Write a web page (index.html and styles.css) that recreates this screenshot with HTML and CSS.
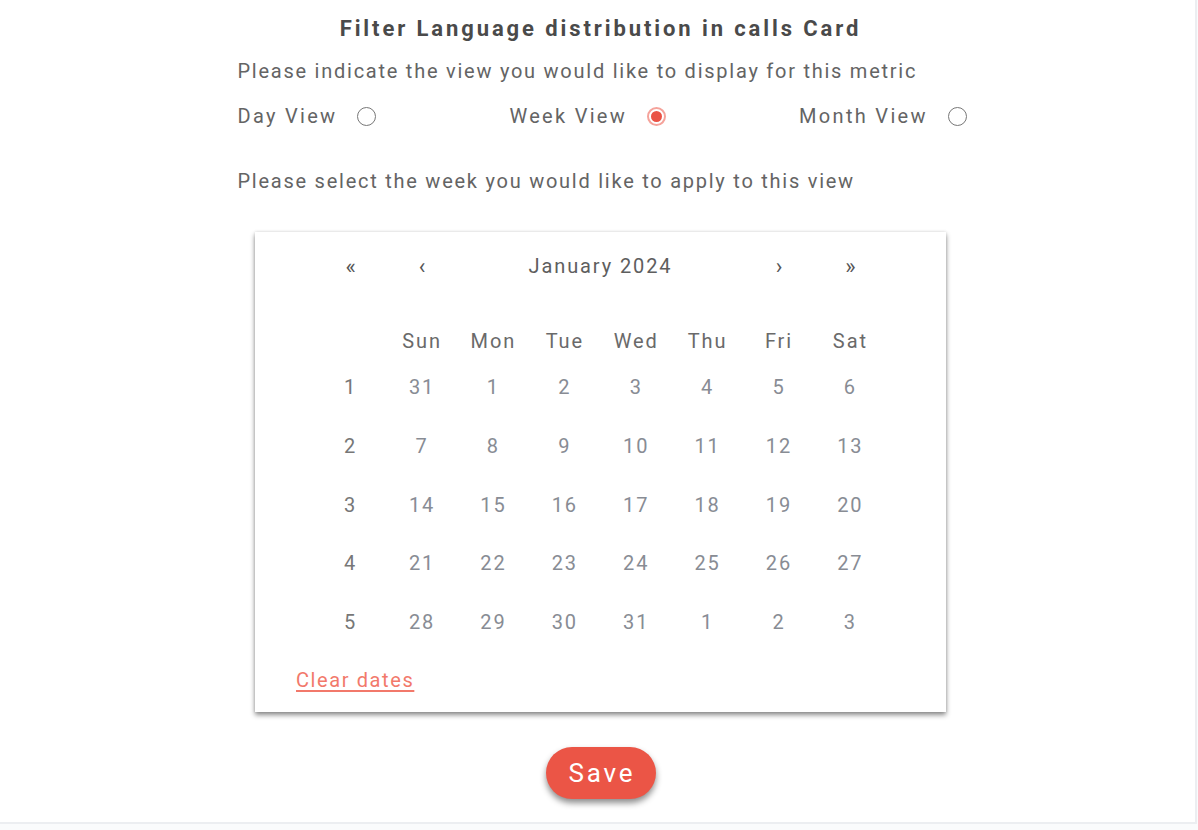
FILE: index.html
```html
<!DOCTYPE html>
<html>
<head>
<meta charset="utf-8">
<link rel="stylesheet" href="styles.css">
</head>
<body>
<div class="panel">
  <div class="content">
    <h1 class="title">Filter Language distribution in calls Card</h1>
    <p class="prompt">Please indicate the view you would like to display for this metric</p>
    <div class="views">
      <label class="view"><span>Day View</span><span class="radio"></span></label>
      <label class="view"><span>Week View</span><span class="radio checked"></span></label>
      <label class="view"><span>Month View</span><span class="radio"></span></label>
    </div>
    <p class="prompt prompt-week">Please select the week you would like to apply to this view</p>
  </div>

  <div class="calendar">
    <div class="cal-grid">
      <div class="nav">«</div>
      <div class="nav">‹</div>
      <div class="month">January 2024</div>
      <div class="nav">›</div>
      <div class="nav">»</div>

      <div class="dow"></div>
      <div class="dow">Sun</div>
      <div class="dow">Mon</div>
      <div class="dow">Tue</div>
      <div class="dow">Wed</div>
      <div class="dow">Thu</div>
      <div class="dow">Fri</div>
      <div class="dow">Sat</div>

      <div class="wk">1</div><div class="day">31</div><div class="day">1</div><div class="day">2</div><div class="day">3</div><div class="day">4</div><div class="day">5</div><div class="day">6</div>
      <div class="wk">2</div><div class="day">7</div><div class="day">8</div><div class="day">9</div><div class="day">10</div><div class="day">11</div><div class="day">12</div><div class="day">13</div>
      <div class="wk">3</div><div class="day">14</div><div class="day">15</div><div class="day">16</div><div class="day">17</div><div class="day">18</div><div class="day">19</div><div class="day">20</div>
      <div class="wk">4</div><div class="day">21</div><div class="day">22</div><div class="day">23</div><div class="day">24</div><div class="day">25</div><div class="day">26</div><div class="day">27</div>
      <div class="wk">5</div><div class="day">28</div><div class="day">29</div><div class="day">30</div><div class="day">31</div><div class="day">1</div><div class="day">2</div><div class="day">3</div>
    </div>
    <a class="clear" href="#">Clear dates</a>
  </div>

  <button class="save">Save</button>
</div>
</body>
</html>
```

FILE: styles.css
```css
html, body {
  margin: 0;
  padding: 0;
  background: #fafbfc;
}

body {
  font-family: Roboto, "Liberation Sans", sans-serif;
  color: #5b5b5b;
}

.panel {
  box-sizing: border-box;
  width: 1197px;
  height: 824px;
  padding-left: 6px;
  background: #ffffff;
  border-right: 2px solid #eceef1;
  border-bottom: 2px solid #eceef1;
  display: flex;
  flex-direction: column;
  align-items: center;
}

.content {
  width: 726px;
}

.title {
  margin: 14px 0 0;
  font-size: 22px;
  line-height: 30px;
  font-weight: 700;
  color: #4a4a4a;
  text-align: center;
  letter-spacing: 2.9px;
}

.prompt {
  margin: 13px 0 0;
  font-size: 20px;
  line-height: 28px;
  letter-spacing: 1.75px;
  color: #646464;
}

.views {
  display: flex;
  gap: 133px;
  margin-top: 17px;
  height: 28px;
  align-items: center;
  white-space: nowrap;
}

.view {
  flex: none;
  display: flex;
  align-items: center;
  gap: 20px;
  font-size: 20px;
  letter-spacing: 2.3px;
  color: #646464;
}

.radio {
  flex: none;
  box-sizing: border-box;
  width: 19px;
  height: 19px;
  border-radius: 50%;
  border: 1.5px solid #777;
  background: #fff;
}

.radio.checked {
  border: 2px solid #f5a39b;
  padding: 2px;
  background: #fff;
  display: flex;
}

.radio.checked::after {
  content: "";
  flex: 1;
  border-radius: 50%;
  background: #ea5245;
}

.prompt-week {
  margin-top: 37px;
}

.calendar {
  box-sizing: border-box;
  width: 691px;
  margin-top: 37px;
  padding: 9px 39px 20px 41px;
  background: #fff;
  box-shadow: 0 3px 5px rgba(0, 0, 0, 0.45), 0 0 3px rgba(0, 0, 0, 0.12);
}

.cal-grid {
  display: grid;
  grid-template-columns: repeat(8, 71.4px);
  grid-template-rows: 50px 67px repeat(5, 58.7px);
  justify-content: center;
  align-items: center;
  margin-left: -2px;
  font-size: 20px;
  letter-spacing: 1.9px;
}

.cal-grid > div {
  text-align: center;
}

.nav {
  font-size: 22px;
  color: #555;
  letter-spacing: 0;
}

.month {
  grid-column: span 4;
  color: #5e5e5e;
}

.dow {
  align-self: end;
  line-height: 34px;
  color: #6a6a6a;
}

.wk {
  color: #777;
}

.day {
  color: #888c94;
}

.clear {
  display: inline-block;
  margin-top: 17px;
  font-size: 20px;
  line-height: 24px;
  letter-spacing: 1.6px;
  color: #f2796b;
  text-decoration: underline;
  text-underline-offset: 3px;
}

.save {
  margin-top: 35px;
  width: 110px;
  height: 52px;
  border: none;
  border-radius: 26px;
  background: #eb5546;
  color: #fff;
  font-family: Roboto, "Liberation Sans", sans-serif;
  font-size: 26px;
  letter-spacing: 2.8px;
  padding: 0 0 0 3px;
  box-shadow: 0 4px 6px rgba(0, 0, 0, 0.45);
  cursor: pointer;
}
```
